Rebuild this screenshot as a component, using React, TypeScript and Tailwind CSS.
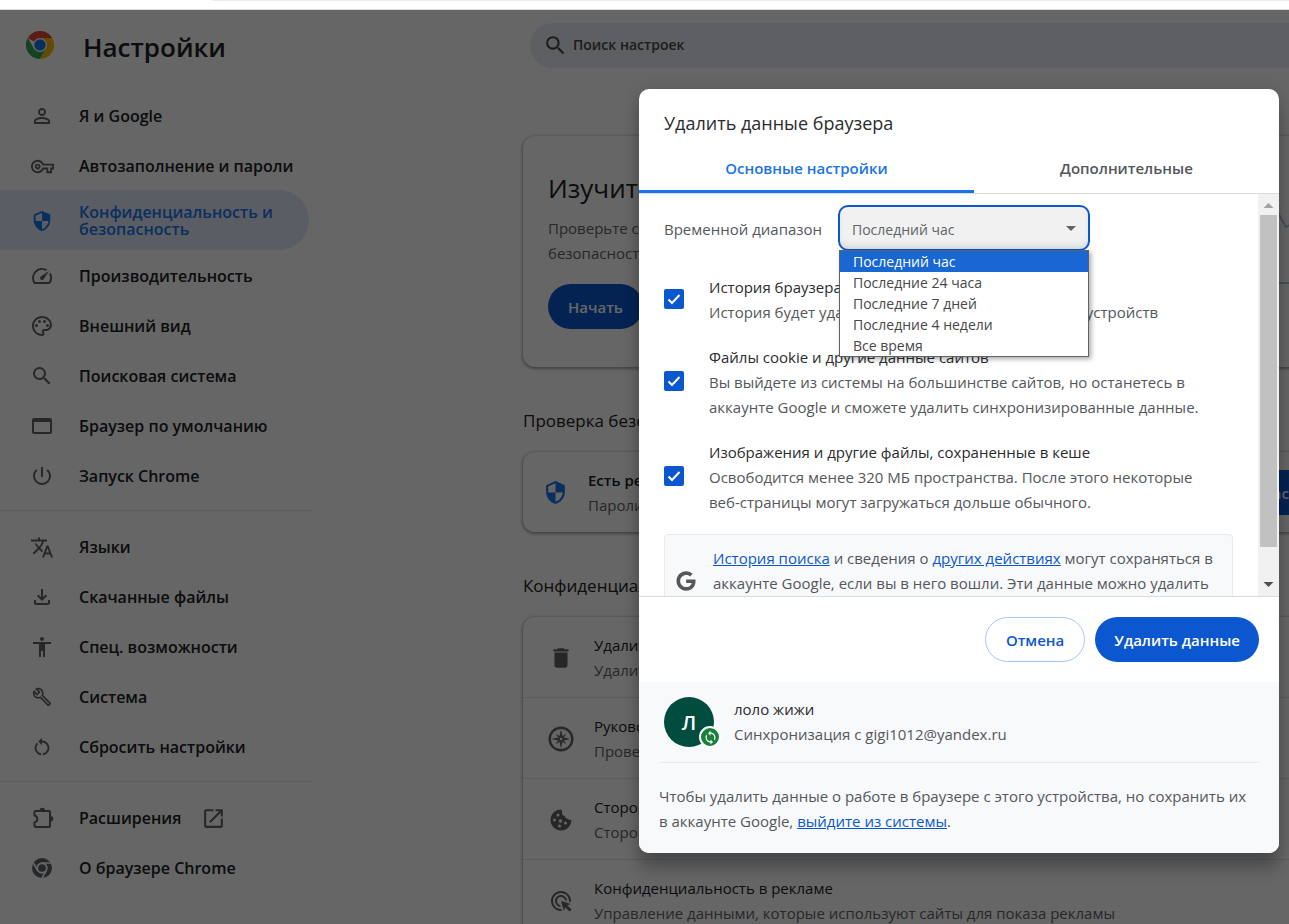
import type { ReactNode } from 'react';
import { FaGoogle } from 'react-icons/fa';
import {
  MdAccessibility,
  MdAdsClick,
  MdDelete,
  MdOpenInNew,
  MdOutlineBuild,
  MdOutlineFileDownload,
  MdOutlinePalette,
  MdOutlineSpeed,
  MdOutlineVpnKey,
  MdPersonOutline,
  MdPowerSettingsNew,
  MdRestartAlt,
  MdSearch,
  MdSecurity,
  MdSync,
  MdTranslate,
} from 'react-icons/md';

type NavItem = { label: string; icon: ReactNode; active?: boolean; external?: boolean };

const navGroups: NavItem[][] = [
  [
    { label: 'Я и Google', icon: <MdPersonOutline size={26} /> },
    { label: 'Автозаполнение и пароли', icon: <MdOutlineVpnKey size={23} /> },
    { label: 'Конфиденциальность и безопасность', icon: <MdSecurity size={22} />, active: true },
    { label: 'Производительность', icon: <MdOutlineSpeed size={24} /> },
    { label: 'Внешний вид', icon: <MdOutlinePalette size={24} /> },
    { label: 'Поисковая система', icon: <MdSearch size={24} /> },
    { label: 'Браузер по умолчанию', icon: <WindowIcon /> },
    { label: 'Запуск Chrome', icon: <MdPowerSettingsNew size={24} /> },
  ],
  [
    { label: 'Языки', icon: <MdTranslate size={25} /> },
    { label: 'Скачанные файлы', icon: <MdOutlineFileDownload size={24} /> },
    { label: 'Спец. возможности', icon: <MdAccessibility size={24} /> },
    { label: 'Система', icon: <WrenchIcon /> },
    { label: 'Сбросить настройки', icon: <MdRestartAlt size={22} /> },
  ],
  [
    { label: 'Расширения', icon: <PuzzleIcon />, external: true },
    { label: 'О браузере Chrome', icon: <ChromeMonoIcon /> },
  ],
];

const privacyRows = [
  {
    title: 'Удалить данные о работе в браузере',
    text: 'Удалить файлы cookie и данные сайтов, очистить историю и кеш',
    icon: <MdDelete size={26} />,
  },
  {
    title: 'Руководство по безопасности',
    text: 'Проверьте важные настройки конфиденциальности и безопасности',
    icon: <CompassIcon />,
  },
  {
    title: 'Сторонние файлы cookie',
    text: 'Сторонние файлы cookie блокируются в режиме инкогнито',
    icon: <CookieIcon />,
  },
  {
    title: 'Конфиденциальность в рекламе',
    text: 'Управление данными, которые используют сайты для показа рекламы',
    icon: <MdAdsClick size={24} />,
  },
];

const ranges = ['Последний час', 'Последние 24 часа', 'Последние 7 дней', 'Последние 4 недели', 'Все время'];

const dataTypes = [
  {
    id: 'history',
    title: 'История браузера',
    text: 'История будет удалена со всех синхронизируемых устройств',
  },
  {
    id: 'cookies',
    title: 'Файлы cookie и другие данные сайтов',
    text: 'Вы выйдете из системы на большинстве сайтов, но останетесь в аккаунте Google и сможете удалить синхронизированные данные.',
  },
  {
    id: 'cache',
    title: 'Изображения и другие файлы, сохраненные в кеше',
    text: 'Освободится менее 320 МБ пространства. После этого некоторые веб-страницы могут загружаться дольше обычного.',
  },
];

function ChromeLogo() {
  return (
    <svg viewBox="0 0 48 48" className="size-7" aria-hidden="true">
      <path d="M24 24 3.2 12A24 24 0 0 1 44.8 12z" fill="#ea4335" />
      <path d="M24 12h20.8A24 24 0 0 1 24 48l10.4-18z" fill="#fbbc04" />
      <path d="M3.2 12 13.6 30 24 36l10.4-6L24 48A24 24 0 0 1 3.2 12z" fill="#34a853" />
      <circle cx="24" cy="24" r="12" fill="#fff" />
      <circle cx="24" cy="24" r="9.8" fill="#1a73e8" />
    </svg>
  );
}

function ChromeMonoIcon() {
  return (
    <svg viewBox="0 0 48 48" className="size-5 shrink-0" aria-hidden="true">
      <circle cx="24" cy="24" r="24" fill="currentColor" />
      <path d="M24 12h21M13.600 30 3.200 12M34.400 30 24 48" fill="none" stroke="#fff" strokeWidth="4" />
      <circle cx="24" cy="24" r="11.500" fill="currentColor" stroke="#fff" strokeWidth="4.500" />
    </svg>
  );
}

function WindowIcon() {
  return (
    <svg viewBox="0 0 20 16" className="h-4 w-5" aria-hidden="true">
      <rect x="1" y="1" width="18" height="14" rx="1" fill="none" stroke="currentColor" strokeWidth="2" />
      <path d="M1 1h18v3H1z" fill="currentColor" />
    </svg>
  );
}

function WrenchIcon() {
  return <MdOutlineBuild size={20} />;
}

function PuzzleIcon() {
  return (
    <svg viewBox="0 0 24 24" className="size-6" aria-hidden="true">
      <path
        d="M5.500 5H19q1 0 1 1v14q0 1-1 1H5.500q-1 0-1-1v-3.500a3.600 3.600 0 0 0 0-7V6q0-1 1-1z"
        fill="none"
        stroke="currentColor"
        strokeWidth="2"
      />
      <path d="M9.500 4.500a2.800 2.800 0 0 1 5.600 0zM20.500 10a2.800 2.800 0 0 1 0 5.600z" fill="currentColor" />
    </svg>
  );
}

function CompassIcon() {
  return (
    <svg viewBox="0 0 26 26" className="size-[26px]" aria-hidden="true">
      <circle cx="13" cy="13" r="11.300" fill="none" stroke="currentColor" strokeWidth="2.400" />
      <path d="m13 3.500 1.800 7.700 7.700 1.800-7.700 1.800L13 22.500l-1.800-7.700L3.500 13l7.700-1.800z" fill="currentColor" />
      <path
        d="m7.500 7.500 4.500 3-1.500 1.500zM18.500 7.500l-3 4.500-1.500-1.500zM18.500 18.500l-4.500-3 1.500-1.500zM7.500 18.500l3-4.500 1.500 1.500z"
        fill="currentColor"
      />
      <circle cx="13" cy="13" r="1.300" fill="#fff" />
    </svg>
  );
}

function CookieIcon() {
  return (
    <svg viewBox="0 0 22 22" className="size-[22px]" aria-hidden="true">
      <path
        d="M11 .5a10.500 10.500 0 1 0 10.500 10.200c-1.300.5-2.700.1-3.400-1-1.700.2-3.100-1-3.100-2.700-2.200-.2-3.700-2.500-2.700-4.600z"
        fill="currentColor"
      />
      <g fill="#fff">
        <circle cx="8" cy="6" r="1.500" />
        <circle cx="4.500" cy="11" r="1.400" />
        <circle cx="10.500" cy="12" r="1.700" />
        <circle cx="9.500" cy="17" r="1.500" />
        <circle cx="15.500" cy="14" r="1.500" />
      </g>
    </svg>
  );
}

function Sidebar() {
  return (
    <nav className="w-[333px] shrink-0">
      <div className="flex h-[70px] items-center gap-[29px] pl-[26px]">
        <ChromeLogo />
        <h1 className="pt-1 text-[26px] font-semibold text-[#202124]">Настройки</h1>
      </div>
      <div className="pt-[10px]">
        {navGroups.map((group, i) => (
          <ul key={i} className="mr-[21px] border-[#e6e6e6] not-first:mt-[10px] not-first:border-t not-first:pt-[10px]">
            {group.map((item) => (
              <li key={item.label}>
                <a
                  href="#"
                  className={
                    item.active
                      ? 'mr-[3px] flex h-[60px] items-center gap-[25px] rounded-r-full bg-[#e2ebfb] pt-[2px] pl-[30px] text-[#1a73e8]'
                      : 'flex h-[50px] items-center gap-[25px] pt-[2px] pl-[30px] text-[#202124]'
                  }
                >
                  <span
                    className={
                      item.active
                        ? 'flex w-6 shrink-0 justify-center'
                        : 'flex w-6 shrink-0 justify-center text-[#5f6368]'
                    }
                  >
                    {item.icon}
                  </span>
                  <span className="text-[16px] leading-[17px] font-semibold">{item.label}</span>
                  {item.external && <MdOpenInNew size={25} className="-ml-[5px] text-[#5f6368]" />}
                </a>
              </li>
            ))}
          </ul>
        ))}
      </div>
    </nav>
  );
}

function SettingsContent() {
  return (
    <main className="min-w-0 flex-1">
      <div className="flex h-[70px] items-center pl-[197px]">
        <label className="flex h-[45px] w-[850px] shrink-0 items-center gap-[5px] rounded-full bg-[#e9eef6] pl-[13px]">
          <MdSearch size={25} className="text-[#474747]" />
          <span className="sr-only">Поиск настроек</span>
          <input
            type="search"
            placeholder="Поиск настроек"
            className="flex-1 bg-transparent pb-[2px] text-[14px] font-semibold outline-none placeholder:text-[#474747]"
          />
        </label>
      </div>

      <div className="ml-[190px] w-[850px] pt-14">
        <section className="flex justify-between rounded-xl bg-white px-[25px] pt-[34px] pb-[38px] shadow-[0_1px_3px_1px_rgba(60,64,67,0.45)]">
          <div>
            <h2 className="text-[26px] leading-9 text-[#202124]">Изучите руководство по безопасности</h2>
            <p className="mt-[10px] text-[15px] leading-[25px] text-[#5f6368]">
              Проверьте самые важные настройки конфиденциальности и
              <br />
              безопасности
            </p>
            <button className="mt-[18px] h-[45px] rounded-full bg-[#0b57d0] px-5 pt-[2px] text-[15px] font-semibold text-white">
              Начать
            </button>
          </div>
          <svg viewBox="0 0 150 120" className="mt-6 h-[120px] w-[150px]" aria-hidden="true">
            <path d="M75 10l13 23 25-14 20 24" fill="none" stroke="#b4c2de" strokeWidth="2" />
            <path d="M10 89h130" stroke="#b4c2de" strokeWidth="2" />
          </svg>
        </section>

        <h2 className="mt-9 mb-[13px] text-[17px] leading-9 text-[#202124]">Проверка безопасности</h2>
        <section className="flex h-20 items-center rounded-xl bg-white px-[20px] shadow-[0_1px_3px_1px_rgba(60,64,67,0.45)]">
          <MdSecurity size={25} className="shrink-0 text-[#1a73e8]" />
          <div className="ml-5 flex-1 pt-[2px] text-[15px] leading-[25px]">
            <p className="font-semibold text-[#202124]">Есть рекомендации по безопасности</p>
            <p className="text-[#5f6368]">Пароли, обновления и другие настройки</p>
          </div>
          <button className="h-[45px] rounded-full bg-[#0b57d0] px-5 pt-[2px] text-[15px] font-semibold text-white">
            Проверка безопасности
          </button>
        </section>

        <h2 className="mt-9 mb-[13px] text-[17px] leading-9 text-[#202124]">Конфиденциальность и безопасность</h2>
        <section className="rounded-xl bg-white shadow-[0_1px_3px_1px_rgba(60,64,67,0.45)]">
          {privacyRows.map((row) => (
            <a
              key={row.title}
              href="#"
              className="flex h-[81px] items-center gap-5 border-b border-[#e6e6e6] pt-[2px] pl-[25px] text-[15px] leading-[25px]"
            >
              <span className="flex w-[26px] shrink-0 justify-center text-[#5f6368]">{row.icon}</span>
              <span>
                <span className="block text-[#202124]">{row.title}</span>
                <span className="block text-[#5f6368]">{row.text}</span>
              </span>
            </a>
          ))}
        </section>
      </div>
    </main>
  );
}

function RangePicker() {
  return (
    <div className="flex items-center gap-[14px]">
      <label htmlFor="range" className="w-40 pt-[2px] whitespace-nowrap">
        Временной диапазон
      </label>
      <div className="relative w-[252px]">
        <select
          id="range"
          className="h-[46px] w-full appearance-none rounded-[10px] border-2 border-[#0b57d0] bg-[#f1f1f1] pt-[2px] pl-3 text-[14px] text-[#5f6368] shadow-[inset_0_-6px_8px_-4px_rgba(0,0,0,0.12)] outline-none"
        >
          {ranges.map((range) => (
            <option key={range}>{range}</option>
          ))}
        </select>
        <svg viewBox="0 0 10 5" className="absolute top-[21px] right-[14px] h-[5px] w-[10px]" aria-hidden="true">
          <path d="M0 0h10L5 5z" fill="#5f6368" />
        </svg>
        <ul className="absolute top-[45px] right-px left-px z-10 border border-[#5f6368] bg-white text-[14px] leading-[21px] text-[#474747] shadow-[2px_2px_5px_rgba(0,0,0,0.35)]">
          {ranges.map((range, i) => (
            <li key={range} className={i === 0 ? 'bg-[#1967d2] pl-[13px] text-white' : 'pl-[13px]'}>
              {range}
            </li>
          ))}
        </ul>
      </div>
    </div>
  );
}

function DataTypeRow({ id, title, text }: { id: string; title: string; text: string }) {
  return (
    <div className="flex items-center gap-[25px]">
      <span className="relative mb-[3px] size-5 shrink-0">
        <input
          id={id}
          type="checkbox"
          defaultChecked
          className="peer block size-5 appearance-none rounded-[2px] border-2 border-[#5f6368] checked:border-[#0b57d0] checked:bg-[#0b57d0]"
        />
        <svg
          viewBox="0 0 20 20"
          className="pointer-events-none absolute inset-0 hidden size-5 peer-checked:block"
          aria-hidden="true"
        >
          <path d="m4.500 10.500 3.500 3.500 7.500-8" fill="none" stroke="#fff" strokeWidth="2" />
        </svg>
      </span>
      <label htmlFor={id} className="pr-3">
        <span className="block text-[#2a2b2e]">{title}</span>
        <span className="block">{text}</span>
      </label>
    </div>
  );
}

function Scrollbar() {
  return (
    <div className="flex w-[21px] shrink-0 flex-col items-center bg-[#f1f1f1]" aria-hidden="true">
      <svg viewBox="0 0 21 21" className="size-[21px]">
        <path d="m10.500 9 5 5h-10z" fill="#a3a3a3" />
      </svg>
      <div className="h-[332px] w-[17px] bg-[#c1c1c1]" />
      <svg viewBox="0 0 21 21" className="mt-auto mb-[2px] size-[21px]">
        <path d="m10.500 14 5-5h-10z" fill="#505050" />
      </svg>
    </div>
  );
}

function ClearDataDialog() {
  return (
    <div
      role="dialog"
      aria-labelledby="dialog-title"
      className="w-[640px] overflow-hidden rounded-[10px] bg-white text-[15px] leading-[25px] text-[#54575b] shadow-[0_0_16px_rgba(0,0,0,0.12),0_16px_16px_rgba(0,0,0,0.24)]"
    >
      <h2 id="dialog-title" className="px-[25px] pt-5 text-[18px] leading-7 text-[#2a2b2e]">
        Удалить данные браузера
      </h2>
      <div role="tablist" className="mt-[7px] flex border-b border-[#dadce0] font-semibold">
        <button
          role="tab"
          aria-selected="true"
          className="h-[49px] flex-auto border-b-3 border-[#1a73e8] pt-[3px] text-[#1a73e8]"
        >
          Основные настройки
        </button>
        <button role="tab" aria-selected="false" className="h-[49px] flex-auto">
          Дополнительные
        </button>
      </div>

      <div className="flex h-[402px] overflow-hidden">
        <div className="min-w-0 flex-1 px-[25px] pt-[11px]">
          <RangePicker />
          <div className="mt-6 flex flex-col gap-5">
            {dataTypes.map((type) => (
              <DataTypeRow key={type.id} {...type} />
            ))}
          </div>
          <div className="mt-[19px] flex items-center gap-[17px] rounded-[4px] border border-[#e8eaed] bg-[#f8f9fb] px-[11px] py-[11px]">
            <FaGoogle size={20} className="mb-[6px] shrink-0" />
            <p>
              <a href="#" className="text-[#0b57d0] underline">
                История поиска
              </a>{' '}
              и сведения о{' '}
              <a href="#" className="text-[#0b57d0] underline">
                других действиях
              </a>{' '}
              могут сохраняться в аккаунте Google, если вы в него вошли. Эти данные можно удалить в любое время.
            </p>
          </div>
        </div>
        <Scrollbar />
      </div>

      <div className="flex justify-end gap-[10px] border-t border-[#dadce0] p-5">
        <button className="h-[45px] rounded-full border border-[#a8c7fa] px-5 pt-[2px] font-semibold text-[#0b57d0]">
          Отмена
        </button>
        <button className="h-[45px] rounded-full bg-[#0b57d0] px-[19px] pt-[2px] font-semibold text-white">
          Удалить данные
        </button>
      </div>

      <footer className="bg-[#f8f9fb] px-5 pt-[15px] pb-[19px]">
        <div className="flex items-center gap-5 border-b border-[#e8eaed] pb-[15px] pl-[5px]">
          <div className="relative flex size-[50px] items-center justify-center rounded-full bg-[#004d40] text-[20px] font-semibold text-white">
            Л
            <span className="absolute -right-[7px] -bottom-px flex size-[22px] items-center justify-center rounded-full border-2 border-white bg-[#188038]">
              <MdSync size={15} />
            </span>
          </div>
          <div>
            <p className="text-[#2a2b2e]">лоло жижи</p>
            <p>Синхронизация с gigi1012@yandex.ru</p>
          </div>
        </div>
        <p className="mt-[21px] pr-2">
          Чтобы удалить данные о работе в браузере с этого устройства, но сохранить их в аккаунте Google,{' '}
          <a href="#" className="text-[#0b57d0] underline">
            выйдите из системы
          </a>
          .
        </p>
      </footer>
    </div>
  );
}

function App() {
  return (
    <div className="flex h-screen flex-col overflow-hidden bg-white font-['Open_Sans','Noto_Sans',sans-serif]">
      <div className="h-[10px] shrink-0 border-b border-[#dadce0] pl-[212px]">
        <div className="h-px rounded-bl bg-[#e9eef6]" />
      </div>
      <div className="relative flex min-h-0 flex-1 overflow-hidden">
        <Sidebar />
        <SettingsContent />
        <div className="absolute inset-0 flex items-start justify-end bg-black/60 pt-[79px] pr-[10px]">
          <ClearDataDialog />
        </div>
      </div>
    </div>
  );
}

export default App;
